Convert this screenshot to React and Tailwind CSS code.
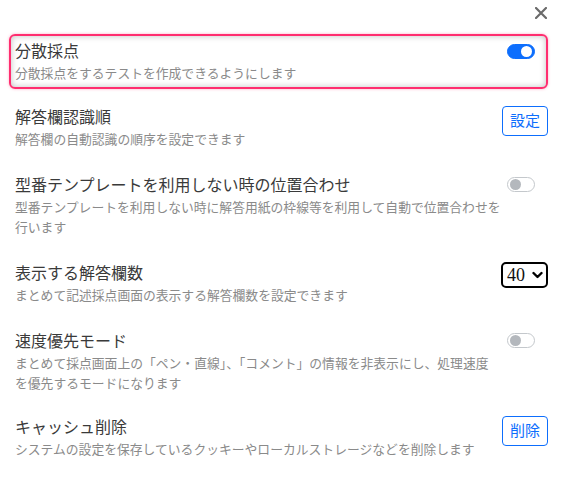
import React from "react";

const font = { fontFamily: '"Liberation Serif", "Noto Sans CJK JP", serif' };

function Toggle({ on }) {
  if (on) {
    return (
      <div className="w-[28px] h-[15px] rounded-full bg-[#0d6efd] border border-[#0d6efd] flex items-center justify-end pr-[2px] shrink-0">
        <div className="w-[11px] h-[11px] rounded-full bg-white" />
      </div>
    );
  }
  return (
    <div className="w-[28px] h-[15px] rounded-full bg-white border border-[#c4c8cc] flex items-center justify-start pl-[2px] shrink-0">
      <div className="w-[11px] h-[11px] rounded-full bg-[#b4b8bd]" />
    </div>
  );
}

function Row({ title, desc, children, highlight, last, mb }) {
  return (
    <div
      className={
        "ml-[9px] mr-[17px] flex items-start justify-between " +
        (highlight
          ? "border-2 border-[#ff2d6f] rounded-[6px] pl-[4px] pt-[4px] pb-[3px] shadow-[inset_0_0_6px_rgba(0,0,0,0.25),0_0_3px_rgba(255,45,111,0.4)]"
          : "pl-[6px] pt-[4px] pb-[7px]") +
        (last ? "" : mb || " mb-[13px]")
      }
    >
      <div className="flex-1 min-w-0 pr-[6px]">
        <div className="text-[16px] leading-[24px] text-[#3a3a3a]">{title}</div>
        <div className="text-[12.8px] leading-[20px] text-[#8a8a8a]">{desc}</div>
      </div>
      {children}
    </div>
  );
}

export default function App() {
  return (
    <div className="w-[565px] h-[496px] bg-white relative" style={font}>
      <div className="flex justify-end pr-[18px] pt-[7px] h-[34px]">
        <svg width="12" height="12" viewBox="0 0 12 12">
          <path d="M1 1 L11 11 M11 1 L1 11" stroke="#6b6b6b" strokeWidth="2.2" strokeLinecap="round" />
        </svg>
      </div>
      <Row highlight title="分散採点" desc="分散採点をするテストを作成できるようにします">
        <div className="mt-[4px] mr-[11px]">
          <Toggle on />
        </div>
      </Row>
      <Row title="解答欄認識順" desc="解答欄の自動認識の順序を設定できます">
        <button className="shrink-0 h-[30px] w-[46px] border border-[#0d6efd] rounded-[4px] text-[#0d6efd] text-[15px] flex items-center justify-center bg-white">
          設定
        </button>
      </Row>
      <Row
        title="型番テンプレートを利用しない時の位置合わせ"
        desc="型番テンプレートを利用しない時に解答用紙の枠線等を利用して自動で位置合わせを行います"
      >
        <div className="mt-[3px] mr-[13px]">
          <Toggle />
        </div>
      </Row>
      <Row title="表示する解答欄数" desc="まとめて記述採点画面の表示する解答欄数を設定できます">
        <div className="shrink-0 h-[26px] w-[47px] border-2 border-black rounded-[5px] flex items-center justify-between pl-[4px] pr-[3px]">
          <span className="text-[18px] leading-none text-[#111]" style={{ fontFamily: '"Liberation Serif", serif' }}>40</span>
          <svg width="11" height="8" viewBox="0 0 11 8">
            <path d="M1.5 2 L5.5 6 L9.5 2" stroke="#000" strokeWidth="2.4" fill="none" strokeLinecap="round" strokeLinejoin="round" />
          </svg>
        </div>
      </Row>
      <Row
        mb=" mb-[11px]"
        title="速度優先モード"
        desc="まとめて採点画面上の「ペン・直線」、「コメント」の情報を非表示にし、処理速度を優先するモードになります"
      >
        <div className="mt-[3px] mr-[13px]">
          <Toggle />
        </div>
      </Row>
      <Row last title="キャッシュ削除" desc="システムの設定を保存しているクッキーやローカルストレージなどを削除します">
        <button className="shrink-0 h-[30px] w-[46px] border border-[#0d6efd] rounded-[4px] text-[#0d6efd] text-[15px] flex items-center justify-center bg-white">
          削除
        </button>
      </Row>
    </div>
  );
}
